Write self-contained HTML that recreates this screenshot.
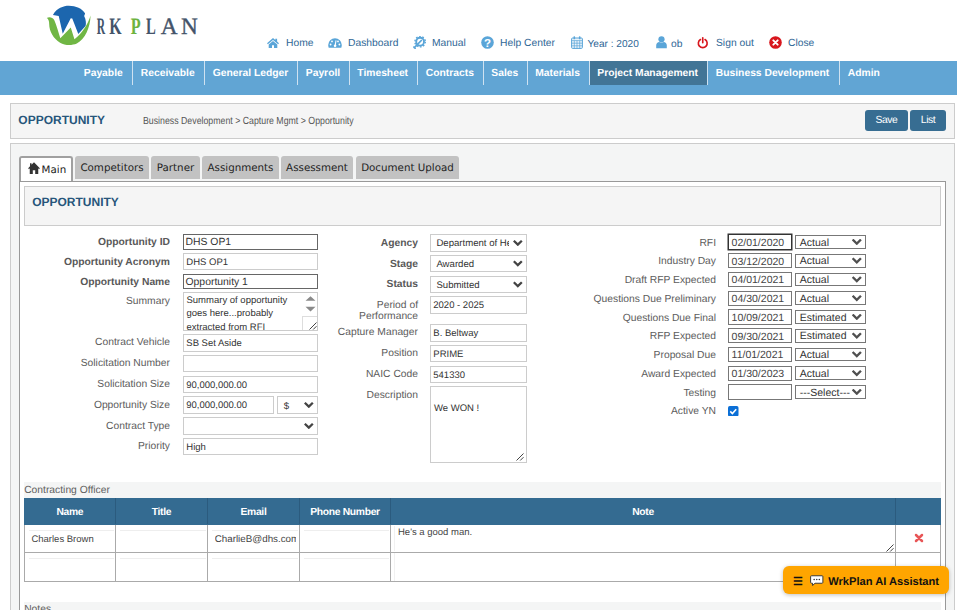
<!DOCTYPE html>
<html><head><meta charset="utf-8"><title>WrkPlan - Opportunity</title>
<style>
*{box-sizing:border-box}
html,body{margin:0;padding:0;overflow:hidden}
body{text-rendering:geometricPrecision;width:957px;height:610px;overflow:hidden;background:#fff;position:relative;font-family:"Liberation Sans",sans-serif;font-size:10.31px;color:#555}
.a{position:absolute}
.nav{left:0;top:61px;width:957px;height:34px;background:#61a5d4}
.nav span{position:absolute;top:0;height:24px;line-height:26.8px;color:#fff;font-weight:bold;font-size:10.31px;white-space:nowrap;border-right:1px solid #cfe2f1;padding:0 9.2px 0 7.8px}
.nav span.act{background:#427596}
.top{position:absolute;top:37.2px;height:14px;line-height:14px;font-size:10.31px;color:#2f6796;white-space:nowrap}
.box{background:#f5f5f5;border:1px solid #ccc}
h1{position:absolute;margin:0;font-size:12px;font-weight:bold;color:#27557b;white-space:nowrap;line-height:14px}
.btn{position:absolute;background:#376d92;color:#fff;border-radius:3px;text-align:center;font-size:10.4px;line-height:22.6px;height:21px;top:110px;letter-spacing:-0.45px}
.tab{position:absolute;top:156px;height:23px;background:#c2c2c2;font-family:"DejaVu Sans",sans-serif;font-size:10.31px;color:#222;line-height:25.5px;text-align:center;border-radius:3px 3px 0 0;white-space:nowrap}
.lbl{position:absolute;text-align:right;white-space:nowrap;color:#5c5c5c;font-size:10.31px;line-height:12px;margin-top:1.5px}
.lbl b{color:#595959}
.inp{position:absolute;background:#fff;border:1px solid #ccc;color:#333;font-size:9.5px;line-height:15px;padding:1px 0 0 2.3px;white-space:nowrap;overflow:hidden}
.inp.dk{border-color:#666;font-size:10.4px;line-height:14px;padding:1.3px 0 0 1.5px}
.sel::after{content:"";position:absolute;right:3.4px;top:calc(50% - 3.1px);width:9.6px;height:6.2px;background:#444;clip-path:polygon(0 1.6px,1.6px 0,4.8px 3.2px,8px 0,9.6px 1.6px,4.8px 6.4px)}
.dt{position:absolute;left:728px;width:64px;height:15.3px;border:1px solid #777;background:#fff;color:#444;font-size:10.5px;line-height:13.5px;padding:1.4px 0 0 2.6px;white-space:nowrap}
.dt.foc{border-color:#333;box-shadow:0 0 0 .5px #333}
.ds{position:absolute;left:795.2px;width:70.6px;height:13.6px;border:1px solid #777;background:#fff;color:#333;font-size:10.5px;line-height:11.6px;padding:1.4px 0 0 3.6px;white-space:nowrap}
.ds::after{content:"";position:absolute;right:3px;top:calc(50% - 3.3px);width:10px;height:6.7px;background:#505050;clip-path:polygon(0 1.7px,1.7px 0,5px 3.3px,8.3px 0,10px 1.7px,5px 6.7px)}
.th{position:absolute;top:498.3px;height:26.2px;line-height:30.4px;text-align:center;color:#fff;font-weight:bold;font-size:10.31px;letter-spacing:-.3px;white-space:nowrap}
.td{font-size:9.5px;color:#444;line-height:12px;white-space:nowrap}
.ai{left:783px;top:565.7px;width:166px;height:28.2px;background:#ffa500;border-radius:6px;box-shadow:0 1px 4px rgba(0,0,0,.25);color:#111;font-weight:bold;font-size:11.14px;line-height:33.2px;white-space:nowrap}
.inp.sel{font-size:9.6px}
#wrap{position:relative;width:957px;height:610px;overflow:hidden;background:#fff}
</style></head><body><div id="wrap">

<!-- logo & icons -->
<svg class="a" style="left:40px;top:0" width="80" height="50" viewBox="0 0 957 598">
<path d="M155,178 C200,100 280,70 345,70 C430,70 505,105 540,160 L528,190 C552,235 553,285 545,310 L458,408 L386,222 L368,218 L272,405 L224,192 Z" fill="#1c66ae"/>
<path d="M80,215 C110,200 150,205 170,238 C198,300 222,390 243,458 L368,330 L412,468 C500,400 570,300 605,185 C600,330 540,470 440,520 C380,545 300,545 240,510 C160,465 110,370 110,290 C110,250 100,225 80,215 Z" fill="#70b644"/>
</svg>
<svg class="a" style="left:0;top:0" width="240" height="50" font-family="Liberation Serif, serif" font-size="23.5"><text transform="translate(96.67,34.1) scale(0.491,1)" fill="#44546a" font-weight="bold">R</text><text transform="translate(109.18,34.1) scale(0.675,1)" fill="#44546a" font-weight="bold">K</text><text transform="translate(130.78,34.1) scale(0.691,1)" fill="#6db33f" font-weight="bold">P</text><text transform="translate(146.11,34.1) scale(0.624,1)" fill="#44546a" font-weight="bold">L</text><text transform="translate(160.67,34.1) scale(0.991,1)" fill="#44546a" stroke="#44546a" stroke-width=".35">A</text><text transform="translate(180.90,34.1) scale(0.991,1)" fill="#44546a" stroke="#44546a" stroke-width=".35">N</text></svg>
<svg class="a" style="left:267px;top:38px" width="12" height="10" viewBox="0 0 12 10"><path d="M6 0L0 5.2l.9 1.1L6 2l5.1 4.300.9-1.100L10.100 3.500V.7H8.300V2z M6 3L1.700 6.600V10H5V7.200h2V10h3.300V6.600z" fill="#5aa5d8"/></svg>
<svg class="a" style="left:327.5px;top:37.8px" width="14" height="10" viewBox="0 0 14 10"><path d="M7 .3a6.8 6.8 0 0 0-6.8 6.8c0 .9.2 1.8.5 2.6h12.6c.3-.8.5-1.700.5-2.600A6.800 6.800 0 0 0 7 .3z" fill="#5aa5d8"/><g fill="#fff"><circle cx="2.600" cy="6.500" r=".9"/><circle cx="4" cy="3.400" r=".9"/><circle cx="10" cy="3.400" r=".9"/><circle cx="11.400" cy="6.500" r=".9"/><path d="M7.600 2.200l-.9 4.300a1.300 1.300 0 1 0 1.200.2l.6-4.300z"/></g></svg>
<svg class="a" style="left:413px;top:35.800px" width="13.500" height="13" viewBox="0 0 13.500 13"><g fill="none" stroke="#5aa5d8"><circle cx="7.100" cy="5.700" r="3.900" stroke-width="1.900"/><circle cx="7.100" cy="5.700" r="5.200" stroke-width="1.400" stroke-dasharray="1.700 1.567"/></g><path d="M1.300 11.700L8.300 4.500" stroke="#5aa5d8" stroke-width="1.700" stroke-linecap="round"/><path d="M.7 10.900l1.600 1.600" stroke="#5aa5d8" stroke-width="1.300" stroke-linecap="round"/></svg>
<svg class="a" style="left:481px;top:35.800px" width="13" height="13" viewBox="0 0 13 13"><circle cx="6.500" cy="6.500" r="6.300" fill="#5aa5d8"/><text x="6.500" y="10.600" text-anchor="middle" font-family="Liberation Sans, sans-serif" font-weight="bold" font-size="11.5" fill="#fff">?</text></svg>
<svg class="a" style="left:570.500px;top:36.200px" width="12" height="13" viewBox="0 0 12 13"><rect x=".6" y="2" width="10.800" height="10.400" rx="1" fill="#eaf3fa" stroke="#5aa5d8" stroke-width="1"/><path d="M.6 4.600h10.800M.6 7.200h10.800M.6 9.800h10.800M3.300 4.600v7.800M6 4.600v7.800M8.700 4.600v7.800" stroke="#5aa5d8" stroke-width=".7"/><rect x="2.500" y=".3" width="1.600" height="3" rx=".6" fill="#5aa5d8"/><rect x="7.900" y=".3" width="1.600" height="3" rx=".6" fill="#5aa5d8"/></svg>
<svg class="a" style="left:655.500px;top:36.300px" width="11" height="12.500" viewBox="0 0 11 12.500"><circle cx="5.500" cy="3.300" r="3.100" fill="#5aa5d8"/><path d="M0.200 12.300V9.200c0-2 1.500-3 3-3.200.7.500 1.500.7 2.300.7s1.600-.2 2.300-.7c1.500.2 3 1.200 3 3.200v3.100z" fill="#5aa5d8"/></svg>
<svg class="a" style="left:697px;top:37px" width="11.500" height="11.500" viewBox="0 0 12 12"><path d="M3.600 2.600a4.600 4.600 0 1 0 4.800 0" fill="none" stroke="#d8161d" stroke-width="1.700" stroke-linecap="round"/><path d="M6 .9v5" stroke="#d8161d" stroke-width="1.700" stroke-linecap="round"/></svg>
<svg class="a" style="left:768.800px;top:36.200px" width="13" height="13" viewBox="0 0 13 13"><circle cx="6.500" cy="6.500" r="6.300" fill="#d8161d"/><path d="M4.300 4.300l4.400 4.400M8.700 4.300L4.300 8.700" stroke="#fff" stroke-width="1.900" stroke-linecap="round"/></svg>

<!-- top links -->
<div class="top" style="left:286px">Home</div>
<div class="top" style="left:348px">Dashboard</div>
<div class="top" style="left:432px">Manual</div>
<div class="top" style="left:500px">Help Center</div>
<div class="top" style="left:587.5px;top:38.2px;font-size:10.1px">Year : 2020</div>
<div class="top" style="left:671px;top:38.2px">ob</div>
<div class="top" style="left:716px">Sign out</div>
<div class="top" style="left:788px">Close</div>

<!-- nav -->
<div class="a nav">
<span style="left:76px;width:57px">Payable</span>
<span style="left:133px;width:72px">Receivable</span>
<span style="left:205px;width:93px">General Ledger</span>
<span style="left:298px;width:51.5px">Payroll</span>
<span style="left:349.5px;width:68.5px">Timesheet</span>
<span style="left:418px;width:65.5px">Contracts</span>
<span style="left:483.5px;width:44px">Sales</span>
<span style="left:527.5px;width:62px">Materials</span>
<span class="act" style="left:589.5px;width:118.5px">Project Management</span>
<span style="left:708px;width:132px">Business Development</span>
<span style="left:840px;width:50px;border-right:0">Admin</span>
</div>

<!-- header box -->
<div class="a box" style="left:10px;top:103px;width:945px;height:35.5px"></div>
<h1 style="left:18.3px;top:112.5px">OPPORTUNITY</h1>
<div class="a" style="left:143px;top:116.2px;font-size:10.31px;color:#555;white-space:nowrap;transform:scaleX(.852);transform-origin:0 0;line-height:12px">Business Development &gt; Capture Mgmt &gt; Opportunity</div>
<div class="btn" style="left:865px;width:43px">Save</div>
<div class="btn" style="left:910px;width:36px">List</div>

<!-- outer box -->
<div class="a box" style="left:10px;top:143px;width:945px;height:480px;background:#f4f5f5"></div>
<!-- tab panel -->
<div class="a" style="left:19px;top:181px;width:927px;height:440px;background:#fff;border:1px solid #999"></div>
<!-- tabs -->
<div class="tab" style="left:19px;top:156px;width:54px;height:25px;background:#fff;border:2px solid #a0a0a0;border-bottom:0;line-height:25.2px;text-align:left;padding-left:20.600px"><svg style="position:absolute;left:6.500px;top:3.800px;transform:scaleX(-1)" width="12" height="12.500" viewBox="0 0 13 12" preserveAspectRatio="none"><path d="M6.500 .2L.2 6l.8.900 .9-.8V11.800h3.300V8h2.600v3.800h3.300V6.100l.9.800.8-.900L10.800 4V1.200H9.200v1.400z" fill="#333"/></svg>Main</div>
<div class="tab" style="left:75px;width:74px">Competitors</div>
<div class="tab" style="left:151px;width:49px">Partner</div>
<div class="tab" style="left:202px;width:77px">Assignments</div>
<div class="tab" style="left:281px;width:72px">Assessment</div>
<div class="tab" style="left:356px;width:103px">Document Upload</div>

<!-- section heading -->
<div class="a box" style="left:24px;top:186px;width:917px;height:39.5px"></div>
<h1 style="left:32.2px;top:195.4px">OPPORTUNITY</h1>


<!-- form -->
<div class="lbl" style="right:787px;top:235.5px"><b>Opportunity ID</b></div>
<div class="inp dk" style="left:183px;top:234px;width:135px;height:16px;line-height:14px">DHS OP1</div>
<div class="lbl" style="right:787px;top:255.0px"><b>Opportunity Acronym</b></div>
<div class="inp " style="left:183px;top:253px;width:135px;height:17px;line-height:15px">DHS OP1</div>
<div class="lbl" style="right:787px;top:275.5px"><b>Opportunity Name</b></div>
<div class="inp dk" style="left:183px;top:274px;width:135px;height:15px;line-height:13px">Opportunity 1</div>
<div class="lbl" style="right:787px;top:294.5px">Summary</div>
<div class="inp ta" style="left:183px;top:292px;width:135px;height:39px;line-height:13.8px;white-space:normal;padding:0 0 0 2.5px"><div style="width:112px;margin-top:0.5px">Summary of opportunity goes here...probably extracted from RFI</div></div>
<div class="lbl" style="right:787px;top:335.5px">Contract Vehicle</div>
<div class="inp " style="left:183px;top:334px;width:135px;height:18px;line-height:16px">SB Set Aside</div>
<div class="lbl" style="right:787px;top:356.5px">Solicitation Number</div>
<div class="inp " style="left:183px;top:355px;width:135px;height:17px;line-height:15px"></div>
<div class="lbl" style="right:787px;top:377.5px">Solicitation Size</div>
<div class="inp " style="left:183px;top:376px;width:135px;height:17px;line-height:15px">90,000,000.00</div>
<div class="lbl" style="right:787px;top:398.5px">Opportunity Size</div>
<div class="inp " style="left:183px;top:396px;width:91px;height:18px;line-height:16px">90,000,000.00</div>
<div class="inp sel" style="left:277px;top:396px;width:41px;height:18px;line-height:16px;padding:1.8px 0 0 5.8px">$</div>
<div class="lbl" style="right:787px;top:419.5px">Contract Type</div>
<div class="inp sel" style="left:183px;top:417px;width:135px;height:18px;line-height:16px"></div>
<div class="lbl" style="right:787px;top:439.5px">Priority</div>
<div class="inp " style="left:183px;top:438px;width:135px;height:17px;line-height:15px">High</div>
<div class="lbl" style="right:539px;top:236.0px"><b>Agency</b></div>
<div class="inp sel" style="left:430px;top:234px;width:97px;height:18px;line-height:16px;padding-left:5.4px"><span style="display:block;width:72.5px;overflow:hidden">Department of Health</span></div>
<div class="lbl" style="right:539px;top:257.0px"><b>Stage</b></div>
<div class="inp sel" style="left:430px;top:255px;width:97px;height:17px;line-height:15px;padding-left:5.4px">Awarded</div>
<div class="lbl" style="right:539px;top:277.5px"><b>Status</b></div>
<div class="inp sel" style="left:430px;top:276px;width:97px;height:17px;line-height:15px;padding-left:5.4px">Submitted</div>
<div class="lbl" style="right:539px;top:298.6px;line-height:11.3px">Period of<br>Performance</div>
<div class="inp " style="left:430px;top:296px;width:97px;height:18px;line-height:16px">2020 - 2025</div>
<div class="lbl" style="right:539px;top:325.5px">Capture Manager</div>
<div class="inp " style="left:430px;top:324px;width:97px;height:18px;line-height:16px">B. Beltway</div>
<div class="lbl" style="right:539px;top:346.5px">Position</div>
<div class="inp " style="left:430px;top:345px;width:97px;height:17px;line-height:15px">PRIME</div>
<div class="lbl" style="right:539px;top:367.5px">NAIC Code</div>
<div class="inp " style="left:430px;top:366px;width:97px;height:17px;line-height:15px">541330</div>
<div class="lbl" style="right:539px;top:388.5px">Description</div>
<div class="inp ta2" style="left:430px;top:386px;width:97px;height:77px;line-height:13.8px;padding:15px 0 0 3px">We WON !</div>
<div class="lbl" style="right:241px;top:236.0px">RFI</div>
<div class="dt foc" style="top:234.40px">02/01/2020</div>
<div class="ds" style="top:235.20px">Actual</div>
<div class="lbl" style="right:241px;top:254.8px">Industry Day</div>
<div class="dt" style="top:253.15px">03/12/2020</div>
<div class="ds" style="top:253.95px">Actual</div>
<div class="lbl" style="right:241px;top:273.5px">Draft RFP Expected</div>
<div class="dt" style="top:271.90px">04/01/2021</div>
<div class="ds" style="top:272.70px">Actual</div>
<div class="lbl" style="right:241px;top:292.2px">Questions Due Preliminary</div>
<div class="dt" style="top:290.65px">04/30/2021</div>
<div class="ds" style="top:291.45px">Actual</div>
<div class="lbl" style="right:241px;top:311.0px">Questions Due Final</div>
<div class="dt" style="top:309.40px">10/09/2021</div>
<div class="ds" style="top:310.20px">Estimated</div>
<div class="lbl" style="right:241px;top:329.8px">RFP Expected</div>
<div class="dt" style="top:328.15px">09/30/2021</div>
<div class="ds" style="top:328.95px">Estimated</div>
<div class="lbl" style="right:241px;top:348.5px">Proposal Due</div>
<div class="dt" style="top:346.90px">11/01/2021</div>
<div class="ds" style="top:347.70px">Actual</div>
<div class="lbl" style="right:241px;top:367.2px">Award Expected</div>
<div class="dt" style="top:365.65px">01/30/2023</div>
<div class="ds" style="top:366.45px">Actual</div>
<div class="lbl" style="right:241px;top:386.0px">Testing</div>
<div class="dt" style="top:384.40px"></div>
<div class="ds" style="top:385.20px">---Select---</div>
<div class="lbl" style="right:241px;top:404.2px">Active YN</div>
<div class="a chk" style="left:728px;top:405.5px"><svg width="10.5" height="10.5" viewBox="0 0 12 12"><rect width="12" height="12" rx="2" fill="#0b6fd6"/><path d="M2.6 6.2l2.4 2.4 4.4-5" stroke="#fff" stroke-width="1.8" fill="none"/></svg></div>


<div class="a" style="left:302.3px;top:315.5px;width:14.700px;height:14.500px;border-left:1px solid #ddd;border-top:1px solid #ddd;background:#fff"></div>
<svg class="a" style="left:308.5px;top:321.5px" width="8" height="8" viewBox="0 0 8 8"><path d="M.5 7.500L7.500 .5M4.200 7.500L7.500 4.200" stroke="#444" stroke-width="1"/></svg>
<svg class="a" style="left:304.500px;top:296px" width="11" height="16" viewBox="0 0 11 16"><path d="M.5 4.800L5.500 .3l5 4.500z M.5 10.800h10l-5 4.700z" fill="#8a8a8a"/></svg>
<svg class="a" style="left:516.3px;top:452.6px" width="8" height="8" viewBox="0 0 8 8"><path d="M.5 7.500L7.500 .5M4.200 7.500L7.500 4.200" stroke="#444" stroke-width="1"/></svg>
<!-- table -->
<div class="a" style="left:24px;top:482px;width:917px;height:16.5px;background:#f4f5f5"></div>
<div class="a" style="left:24.2px;top:485.3px;font-size:10.31px;color:#606060;line-height:12px">Contracting Officer</div>
<div class="a" style="left:24px;top:498px;width:917px;height:27px;background:#346b91"></div>
<div class="th" style="left:24.3px;width:91.2px">Name</div>
<div class="th" style="left:115.5px;width:92.0px">Title</div>
<div class="th" style="left:207.5px;width:92.0px">Email</div>
<div class="th" style="left:299.5px;width:91.0px">Phone Number</div>
<div class="th" style="left:390.5px;width:505.0px">Note</div>
<div class="th" style="left:895.5px;width:45.5px"></div>
<div class="a" style="left:24px;top:525px;width:917px;height:57px;background:#fff;border:1px solid #aaa;border-top:0"></div>
<div class="a" style="left:24px;top:552px;width:917px;height:1px;background:#aaa"></div>
<div class="a" style="left:115.0px;top:525px;width:1px;height:57px;background:#aaa"></div>
<div class="a" style="left:115.0px;top:498.3px;width:1px;height:26.2px;background:#2b5b7e"></div>
<div class="a" style="left:207.0px;top:525px;width:1px;height:57px;background:#aaa"></div>
<div class="a" style="left:207.0px;top:498.3px;width:1px;height:26.2px;background:#2b5b7e"></div>
<div class="a" style="left:299.0px;top:525px;width:1px;height:57px;background:#aaa"></div>
<div class="a" style="left:299.0px;top:498.3px;width:1px;height:26.2px;background:#2b5b7e"></div>
<div class="a" style="left:390.0px;top:525px;width:1px;height:57px;background:#aaa"></div>
<div class="a" style="left:390.0px;top:498.3px;width:1px;height:26.2px;background:#2b5b7e"></div>
<div class="a" style="left:895.0px;top:525px;width:1px;height:57px;background:#aaa"></div>
<div class="a" style="left:895.0px;top:498.3px;width:1px;height:26.2px;background:#2b5b7e"></div>
<div class="a" style="left:28.8px;top:530px;width:85.2px;height:1px;background:#eee"></div>
<div class="a" style="left:120.0px;top:530px;width:86.0px;height:1px;background:#eee"></div>
<div class="a" style="left:212.0px;top:530px;width:86.0px;height:1px;background:#eee"></div>
<div class="a" style="left:304.0px;top:530px;width:85.0px;height:1px;background:#eee"></div>
<div class="a" style="left:28.8px;top:558px;width:85.2px;height:1px;background:#eee"></div>
<div class="a" style="left:120.0px;top:558px;width:86.0px;height:1px;background:#eee"></div>
<div class="a" style="left:212.0px;top:558px;width:86.0px;height:1px;background:#eee"></div>
<div class="a" style="left:304.0px;top:558px;width:85.0px;height:1px;background:#eee"></div>
<div class="a td" style="left:31.4px;top:534.2px">Charles Brown</div>
<div class="a td" style="left:214.700px;top:534.2px;width:81.200px;overflow:hidden;font-size:9.800px">CharlieB@dhs.com</div>
<div class="a td" style="left:398px;top:527px">He&#39;s a good man.</div>
<div class="a" style="left:914px;top:532.5px;width:10px;height:10px"><svg width="10" height="10" viewBox="0 0 10 10"><path d="M2 2L8 8M8 2L2 8" stroke="#e85657" stroke-width="2.5" stroke-linecap="round"/></svg></div>
<svg class="a" style="left:886px;top:543.5px" width="8" height="8" viewBox="0 0 8 8"><path d="M.5 7.500L7.500 .5M4.200 7.500L7.500 4.200" stroke="#444" stroke-width="1"/></svg>
<div class="a" style="left:394px;top:526px;width:1px;height:25px;background:#f1f1f1"></div>
<div class="a" style="left:394px;top:553px;width:1px;height:28px;background:#f1f1f1"></div>
<div class="a" style="left:24px;top:601.6px;width:917px;height:16px;background:#f4f5f5"></div>
<div class="a" style="left:24.2px;top:603.9px;font-size:10.31px;color:#606060;line-height:12px">Notes</div>
<div class="a ai"><span style="position:absolute;left:10px;top:0;font-size:11px">&#9776;</span><svg style="position:absolute;left:27px;top:9px" width="13.5" height="11.5" viewBox="0 0 14 12"><path d="M1.5 .8h11a.9.9 0 0 1 .9.9v6a.9.9 0 0 1-.9.9H5.2L2.6 11V8.6H1.5a.9.9 0 0 1-.9-.9v-6a.9.9 0 0 1 .9-.9z" fill="#fff" stroke="#333" stroke-width="1"/><circle cx="4.3" cy="4.7" r=".8" fill="#333"/><circle cx="7" cy="4.7" r=".8" fill="#333"/><circle cx="9.7" cy="4.7" r=".8" fill="#333"/></svg><span style="position:absolute;left:45.2px;top:0">WrkPlan AI Assistant</span></div>

</div></body></html>
